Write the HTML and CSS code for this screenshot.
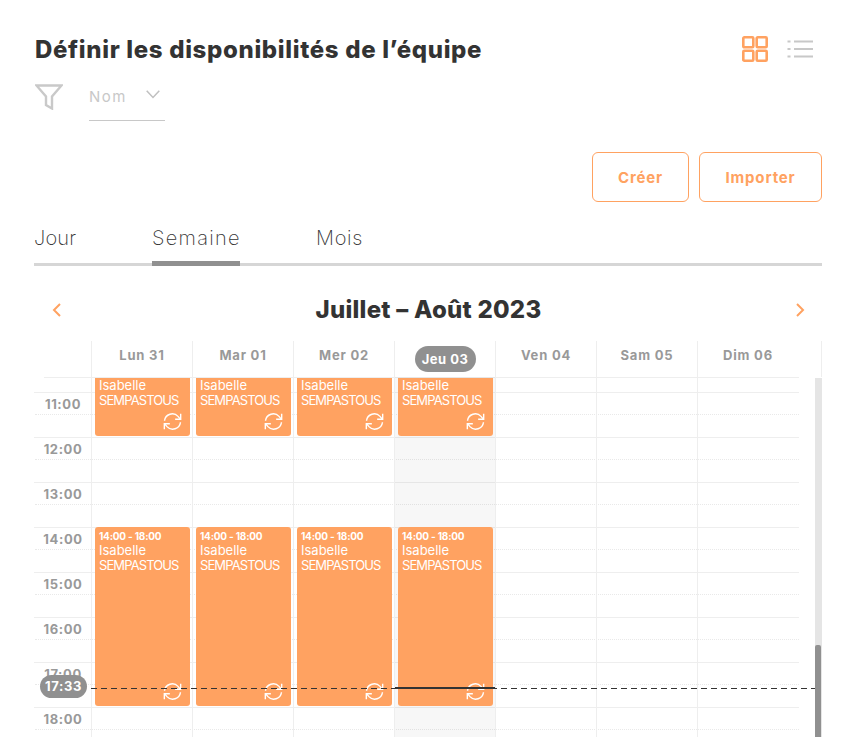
FILE: index.html
```html
<!DOCTYPE html>
<html lang="fr">
<head>
    <meta charset="UTF-8">
    <meta name="viewport" content="width=device-width, initial-scale=1.0">
    <title>Disponibilités</title>
    <link rel="stylesheet" href="styles.css">
</head>
<body>
    <svg class="defs" width="0" height="0">
        <symbol id="sync" viewBox="0 0 20 20">
            <path d="M1.600 9.200A8.200 8.200 0 0 1 15.800 4.600L18 7.200M18.400 10.800A8.200 8.200 0 0 1 4.200 15.400L2 12.800" fill="none" stroke="currentColor" stroke-width="1.500"/>
            <path d="M18.600 1.800V7.600H12.800M1.400 18.200V12.400H7.200" fill="none" stroke="currentColor" stroke-width="1.500"/>
        </symbol>
    </svg>
    <div class="page">
        <div class="title-row">
            <h1>Définir les disponibilités de l’équipe</h1>
            <div class="views">
                <svg class="view-grid" width="26" height="26" viewBox="0 0 26 26">
                    <rect x="1.300" y="1.300" width="10" height="10" rx="1"/>
                    <rect x="14.700" y="1.300" width="10" height="10" rx="1"/>
                    <rect x="1.300" y="14.700" width="10" height="10" rx="1"/>
                    <rect x="14.700" y="14.700" width="10" height="10" rx="1"/>
                </svg>
                <svg class="view-list" width="26" height="18" viewBox="0 0 26 18">
                    <path d="M.5 1.500h3M7 1.500h19M.5 9h3M7 9h19M.5 16.500h3M7 16.500h19"/>
                </svg>
            </div>
        </div>

        <div class="filter-row">
            <svg class="filter-icon" width="28" height="26" viewBox="0 0 28 26">
                <path d="M1.500 1.500H26.500L17 12.500V24.500L11 21V12.500Z"/>
            </svg>
            <div class="select">
                <span>Nom</span>
                <svg width="14" height="9" viewBox="0 0 14 9"><path d="M.7 .7 7 7.500 13.300 .7"/></svg>
            </div>
        </div>

        <div class="actions">
            <button class="btn-create">Créer</button>
            <button class="btn-import">Importer</button>
        </div>

        <div class="tabs">
            <div class="tab tab-day">Jour</div>
            <div class="tab tab-week active">Semaine</div>
            <div class="tab">Mois</div>
        </div>

        <div class="cal-title">
            <svg class="chev" width="9" height="14" viewBox="0 0 9 14"><path d="M8 1 2 7l6 6"/></svg>
            <h2>Juillet – Août 2023</h2>
            <svg class="chev" width="9" height="14" viewBox="0 0 9 14"><path d="M1 1l6 6-6 6"/></svg>
        </div>

        <div class="cal-head">
            <div class="head-cell">Lun 31</div>
            <div class="head-cell">Mar 01</div>
            <div class="head-cell">Mer 02</div>
            <div class="head-cell today"><span>Jeu 03</span></div>
            <div class="head-cell">Ven 04</div>
            <div class="head-cell">Sam 05</div>
            <div class="head-cell">Dim 06</div>
        </div>

        <div class="cal-body">
            <div class="row-partial"></div>
            <div class="hour"><span>11:00</span></div>
            <div class="hour"><span>12:00</span></div>
            <div class="hour"><span>13:00</span></div>
            <div class="hour"><span>14:00</span></div>
            <div class="hour"><span>15:00</span></div>
            <div class="hour"><span>16:00</span></div>
            <div class="hour"><span>17:00</span></div>
            <div class="hour"><span>18:00</span></div>

            <div class="days">
                <div class="day">
                    <div class="event morning">
                        <div class="who">Isabelle<br>SEMPASTOUS</div>
                        <svg class="sync"><use href="#sync"/></svg>
                    </div>
                    <div class="event afternoon">
                        <div class="time">14:00 - 18:00</div>
                        <div class="who">Isabelle<br>SEMPASTOUS</div>
                        <svg class="sync"><use href="#sync"/></svg>
                    </div>
                </div>
                <div class="day">
                    <div class="event morning">
                        <div class="who">Isabelle<br>SEMPASTOUS</div>
                        <svg class="sync"><use href="#sync"/></svg>
                    </div>
                    <div class="event afternoon">
                        <div class="time">14:00 - 18:00</div>
                        <div class="who">Isabelle<br>SEMPASTOUS</div>
                        <svg class="sync"><use href="#sync"/></svg>
                    </div>
                </div>
                <div class="day">
                    <div class="event morning">
                        <div class="who">Isabelle<br>SEMPASTOUS</div>
                        <svg class="sync"><use href="#sync"/></svg>
                    </div>
                    <div class="event afternoon">
                        <div class="time">14:00 - 18:00</div>
                        <div class="who">Isabelle<br>SEMPASTOUS</div>
                        <svg class="sync"><use href="#sync"/></svg>
                    </div>
                </div>
                <div class="day day-today">
                    <div class="event morning">
                        <div class="who">Isabelle<br>SEMPASTOUS</div>
                        <svg class="sync"><use href="#sync"/></svg>
                    </div>
                    <div class="event afternoon">
                        <div class="time">14:00 - 18:00</div>
                        <div class="who">Isabelle<br>SEMPASTOUS</div>
                        <svg class="sync"><use href="#sync"/></svg>
                    </div>
                </div>
                <div class="day"></div>
                <div class="day"></div>
                <div class="day"></div>
            </div>

            <div class="now-line"></div>
            <div class="now-today"></div>
            <div class="now-pill">17:33</div>

            <div class="scrollbar"><div class="thumb"></div></div>
        </div>
    </div>
</body>
</html>
```

FILE: styles.css
```css
* {
    box-sizing: border-box;
}
html, body {
    height: 100%;
}
body {
    margin: 0;
    overflow: hidden;
    background: #fff;
    font-family: 'Inter', sans-serif;
    color: #333;
}
.defs {
    position: absolute;
}
.page {
    width: 788px;
    margin-left: 34px;
    padding-top: 34px;
}

/* top */
.title-row {
    display: flex;
    justify-content: space-between;
    height: 46px;
}
h1 {
    margin: 0;
    font-size: 24px;
    line-height: 31px;
    font-weight: 800;
    letter-spacing: 0.66px;
    padding-left: 1px;
}
.views {
    display: flex;
    align-items: flex-start;
    gap: 19px;
    padding: 2px 9px 0 0;
}
.view-grid rect {
    fill: none;
    stroke: #ffa261;
    stroke-width: 2.600;
}
.view-list {
    margin-top: 4px;
}
.view-list path {
    stroke: #c8c8c8;
    stroke-width: 2;
    fill: none;
}
.filter-row {
    display: flex;
    align-items: flex-start;
    height: 41px;
}
.filter-icon {
    margin: 4px 0 0 1px;
}
.filter-icon path {
    fill: none;
    stroke: #c9c9c9;
    stroke-width: 2.400;
}
.select {
    width: 76px;
    height: 41px;
    margin-left: 26px;
    padding: 6px 5px 0 0;
    display: flex;
    justify-content: space-between;
    border-bottom: 1px solid #c8c8c8;
    color: #c8c8c8;
    font-size: 15px;
    letter-spacing: 1.500px;
    line-height: 22px;
}
.select svg {
    margin-top: 4px;
}
.select path {
    fill: none;
    stroke: #c0c0c0;
    stroke-width: 1.500;
}

/* buttons */
.actions {
    display: flex;
    justify-content: flex-end;
    gap: 10px;
    margin-top: 31px;
}
.actions button {
    height: 50px;
    background: #fff;
    border: 1px solid #ffa261;
    border-radius: 6px;
    color: #ffa261;
    font-family: inherit;
    font-size: 15px;
    font-weight: 700;
    letter-spacing: 0.85px;
}
.btn-create {
    width: 97px;
}
.btn-import {
    width: 123px;
}

/* tabs */
.tabs {
    display: flex;
    height: 64px;
    padding-top: 22px;
    border-bottom: 3px solid #d6d6d6;
}
.tab {
    height: 42px;
    margin-right: 76px;
    font-size: 20px;
    font-weight: 200;
    line-height: 29px;
    letter-spacing: 0.7px;
    color: #333;
}
.tab-day {
    width: 42px;
    letter-spacing: 0.2px;
}
.tab-week {
    width: 88px;
    letter-spacing: 1.300px;
}
.tab.active {
    border-bottom: 5px solid #909090;
}

/* calendar title */
.cal-title {
    display: flex;
    justify-content: space-between;
    align-items: center;
    height: 40px;
    margin-top: 24px;
    padding: 0 17px 0 18px;
}
h2 {
    margin: 0;
    font-size: 24px;
    font-weight: 800;
    letter-spacing: 0.25px;
    line-height: 36px;
}
.chev path {
    fill: none;
    stroke: #ffa261;
    stroke-width: 2;
}

/* calendar head */
.cal-head {
    display: flex;
    height: 36px;
    margin-top: 11px;
    padding-left: 57px;
    border-right: 1px solid #eee;
}
.head-cell {
    width: 101px;
    border-left: 1px solid #eee;
    padding-top: 5px;
    text-align: center;
    font-size: 13px;
    font-weight: 700;
    line-height: 18px;
    letter-spacing: 0.8px;
    color: #999;
}
.today span {
    display: inline-block;
    width: 61px;
    height: 26px;
    border-radius: 13px;
    background: #909090;
    color: #fff;
    line-height: 26px;
    letter-spacing: 0.5px;
}

/* calendar body */
.cal-body {
    position: relative;
    height: 360px;
    overflow: hidden;
}
.row-partial {
    width: 755px;
    height: 15px;
    margin-left: 10px;
    border-top: 1px solid #eee;
}
.hour {
    position: relative;
    width: 765px;
    height: 45px;
    border-top: 1px solid #eee;
}
.hour::after {
    content: "";
    position: absolute;
    left: 1px;
    right: 0;
    top: 21px;
    border-top: 1px dotted #e9e9e9;
}
.hour span {
    display: block;
    width: 58px;
    padding-top: 2px;
    text-align: center;
    font-size: 13px;
    font-weight: 700;
    line-height: 18px;
    letter-spacing: 0.6px;
    color: #999;
}
.days {
    position: absolute;
    left: 57px;
    top: 0;
    bottom: 0;
    display: flex;
}
.day {
    position: relative;
    width: 101px;
    border-left: 1px solid #eee;
}
.day-today {
    background: rgba(0, 0, 0, 0.03);
}
.event {
    position: absolute;
    left: 3px;
    width: 95px;
    padding: 0 4px;
    background: #ffa261;
    border-radius: 3px;
    color: #fff;
}
.morning {
    top: 1px;
    height: 58px;
    border-radius: 0 0 3px 3px;
}
.afternoon {
    top: 150px;
    height: 179px;
    padding-top: 3px;
}
.time {
    font-size: 10px;
    font-weight: 700;
    line-height: 13px;
    letter-spacing: -0.2px;
}
.who {
    font-size: 13px;
    line-height: 15px;
    letter-spacing: -0.9px;
}
.who::first-line {
    letter-spacing: 0;
}
.sync {
    position: absolute;
    right: 8px;
    bottom: 5px;
    width: 19px;
    height: 19px;
}
.now-line {
    position: absolute;
    left: 57px;
    top: 311px;
    width: 724px;
    height: 1px;
    background: repeating-linear-gradient(to right, #333 0 6px, transparent 6px 10px);
}
.now-today {
    position: absolute;
    left: 361px;
    top: 310px;
    width: 100px;
    height: 2px;
    background: #333;
}
.now-pill {
    position: absolute;
    left: 6px;
    top: 298px;
    width: 47px;
    height: 23px;
    border-radius: 12px;
    background: #909090;
    color: #fff;
    text-align: center;
    font-size: 13px;
    font-weight: 700;
    line-height: 23px;
    letter-spacing: 0.6px;
}
.scrollbar {
    position: absolute;
    right: 0;
    top: 1px;
    bottom: 0;
    width: 7px;
    background: #e5e5e5;
}
.thumb {
    position: absolute;
    left: 0;
    right: 1px;
    top: 267px;
    bottom: 0;
    border-radius: 2px 2px 0 0;
    background: #909090;
}
```
